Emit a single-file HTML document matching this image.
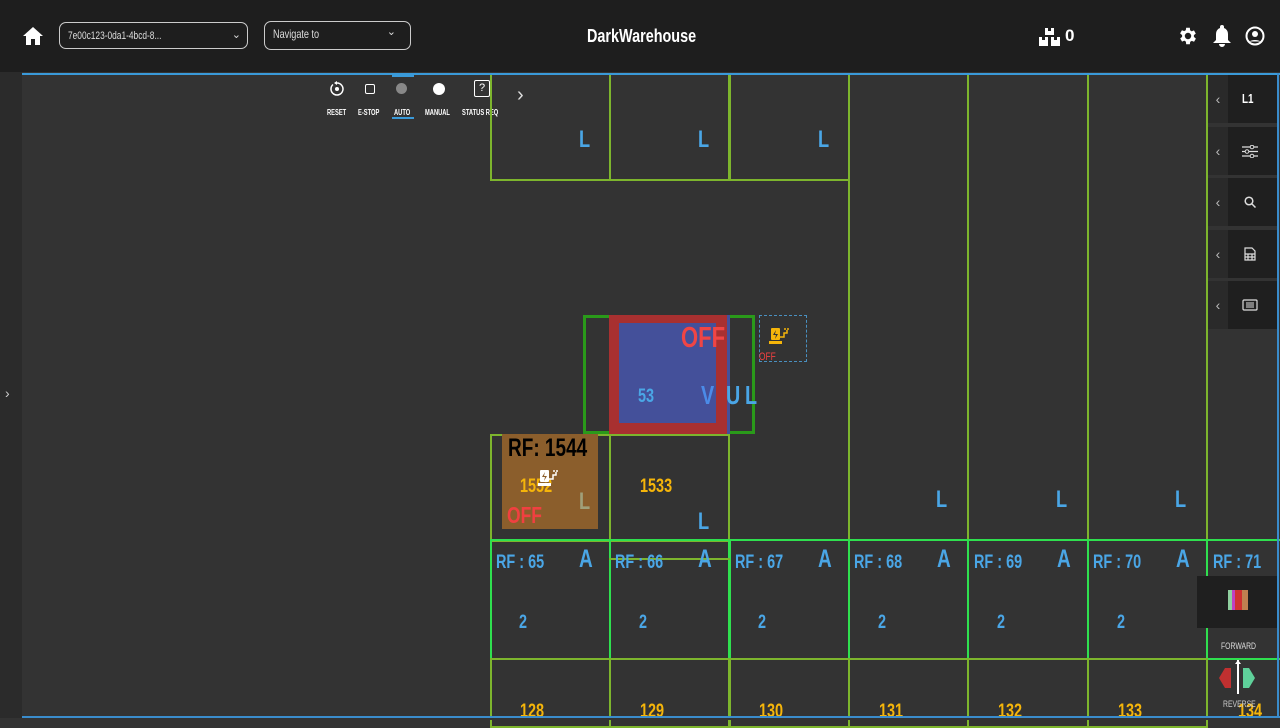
<!DOCTYPE html>
<html><head><meta charset="utf-8"><style>
*{margin:0;padding:0;box-sizing:border-box}
body{width:1280px;height:720px;overflow:hidden;background:#333;font-family:"Liberation Sans",sans-serif;position:relative}
.a{position:absolute}
.n{transform:scaleX(.76);transform-origin:0 0;white-space:nowrap}
.hdr{left:0;top:0;width:1280px;height:72px;background:#1e1e1e}
.sel{border:1.5px solid #ccc;border-radius:7px;color:#ddd;font-size:12px}
.c{position:absolute;border:2px solid #7db52d}
.g{position:absolute;border:2px solid #2fe04f}
.t{position:absolute;font-weight:bold;color:#4aa6e6;transform:scaleX(.76);transform-origin:0 0;white-space:nowrap}
.y{position:absolute;font-weight:bold;color:#f5b50a;transform:scaleX(.76);transform-origin:0 0;white-space:nowrap}
.rb{position:absolute;left:1208px;width:70px;height:48px;background:#1f1f1f}
.rb .ch{position:absolute;left:0;top:0;width:20px;height:48px;background:#2a2a2a;color:#bbb;font-size:14px;text-align:center;line-height:48px}
.tb{position:absolute;top:108px;color:#fff;font-size:8px;font-weight:bold;transform:scaleX(.72);transform-origin:0 0;white-space:nowrap}
</style></head><body>
<div class="a hdr"></div>
<svg class="a" style="left:23px;top:27px" width="20" height="18" viewBox="0 0 20 18"><path d="M10 0L0 9h3v9h5v-6h4v6h5V9h3z" fill="#fff"/></svg>
<div class="a sel" style="left:59px;top:22px;width:189px;height:27px;padding:7px 8px;font-size:11px"><span class="a n" style="left:8px;top:7px">7e00c123-0da1-4bcd-8...</span><span style="position:absolute;right:6px;top:5px;font-size:11px">⌄</span></div>
<div class="a sel" style="left:264px;top:21px;width:147px;height:29px;padding:6px 8px"><span class="a n" style="left:8px;top:5px">Navigate to</span><span style="position:absolute;right:14px;top:3px;font-size:11px">⌄</span></div>
<div class="a n" style="left:587px;top:26px;color:#fff;font-weight:bold;font-size:18px;transform:scaleX(.8)">DarkWarehouse</div>
<svg class="a" style="left:1039px;top:28px" width="22" height="18" viewBox="0 0 22 18"><path d="M6 0h9v7H6zM0 9h9v9H0zM12 9h9v9h-9z" fill="#fff"/><path d="M9 0v3h3V0M3 9v3h3V9M15 9v3h3V9" fill="#1e1e1e"/></svg>
<div class="a" style="left:1065px;top:26px;color:#fff;font-weight:bold;font-size:17px">0</div>
<svg class="a" style="left:1177px;top:25px" width="22" height="22" viewBox="0 0 24 24"><path fill="#fff" d="M19.4 13a7.5 7.5 0 000-2l2.1-1.6-2-3.5-2.5 1a7 7 0 00-1.7-1L15 3h-4l-.4 2.7a7 7 0 00-1.7 1l-2.5-1-2 3.5L6.6 11a7.5 7.5 0 000 2l-2.1 1.6 2 3.5 2.5-1a7 7 0 001.7 1L11 21h4l.4-2.7a7 7 0 001.7-1l2.5 1 2-3.5zM13 15.5a3.5 3.5 0 110-7 3.5 3.5 0 010 7z" transform="translate(-1 0)"/></svg>
<svg class="a" style="left:1213px;top:25px" width="18" height="22" viewBox="0 0 18 22"><path fill="#fff" d="M9 0a2 2 0 012 2v1a6 6 0 014 6v6l3 3H0l3-3V9a6 6 0 014-6V2a2 2 0 012-2zM6 19h6a3 3 0 01-6 0z"/></svg>
<svg class="a" style="left:1245px;top:26px" width="20" height="20" viewBox="0 0 20 20"><circle cx="10" cy="10" r="8.5" fill="none" stroke="#fff" stroke-width="2"/><circle cx="10" cy="8" r="3" fill="#fff"/><path d="M4.5 15.5a7 4 0 0111 0" fill="#fff"/></svg>

<div class="a" style="left:0;top:72px;width:22px;height:648px;background:#2b2b2b"></div>
<div class="a" style="left:5px;top:385px;color:#ccc;font-size:14px">›</div>

<!-- toolbar -->
<svg class="a" style="left:329px;top:81px" width="16" height="16" viewBox="0 0 16 16"><path d="M4 3.5A6 6 0 108 2" fill="none" stroke="#fff" stroke-width="1.5"/><path d="M8 0v4l-3-2z" fill="#fff"/><circle cx="8" cy="8" r="2" fill="#fff"/></svg>
<div class="a" style="left:365px;top:84px;width:10px;height:10px;border:1.5px solid #fff;border-radius:2px"></div>
<div class="a" style="left:392px;top:75px;width:22px;height:2px;background:#3a9ad9"></div>
<div class="a" style="left:396px;top:83px;width:11px;height:11px;border-radius:50%;background:#888"></div>
<div class="a" style="left:433px;top:83px;width:12px;height:12px;border-radius:50%;background:#fff"></div>
<div class="a" style="left:474px;top:80px;width:16px;height:17px;border:1.5px solid #fff;border-radius:2px;color:#fff;font-size:11px;text-align:center;line-height:14px">?</div>
<div class="a" style="left:392px;top:117px;width:22px;height:2px;background:#3a9ad9"></div>
<div class="tb" style="left:327px">RESET</div>
<div class="tb" style="left:358px">E-STOP</div>
<div class="tb" style="left:394px">AUTO</div>
<div class="tb" style="left:425px">MANUAL</div>
<div class="tb" style="left:462px">STATUS REQ</div>
<div class="a" style="left:517px;top:84px;color:#ddd;font-size:20px">›</div>

<!-- top cells -->
<div class="c" style="left:490px;top:73px;width:121px;height:108px"></div>
<div class="c" style="left:609px;top:73px;width:122px;height:108px"></div>
<div class="c" style="left:728px;top:73px;width:122px;height:108px"></div>
<div class="t" style="left:579px;top:126px;font-size:24px">L</div>
<div class="t" style="left:698px;top:126px;font-size:24px">L</div>
<div class="t" style="left:818px;top:126px;font-size:24px">L</div>
<div class="a" style="left:848px;top:73px;width:2px;height:468px;background:#7db52d"></div>
<div class="a" style="left:967px;top:73px;width:2px;height:468px;background:#7db52d"></div>
<div class="a" style="left:1087px;top:73px;width:2px;height:468px;background:#7db52d"></div>
<div class="a" style="left:1206px;top:73px;width:2px;height:647px;background:#7db52d"></div>
<div class="t" style="left:936px;top:486px;font-size:24px">L</div>
<div class="t" style="left:1056px;top:486px;font-size:24px">L</div>
<div class="t" style="left:1175px;top:486px;font-size:24px">L</div>

<!-- middle cells -->
<div class="c" style="left:490px;top:434px;width:121px;height:108px"></div>
<div class="c" style="left:609px;top:434px;width:121px;height:108px"></div>
<div class="a" style="left:502px;top:434px;width:96px;height:95px;background:#8b5e2c"></div>
<div class="a n" style="left:508px;top:434px;font-weight:bold;font-size:25px;color:#000">RF: 1544</div>
<div class="y" style="left:520px;top:476px;font-size:19px">1552</div>
<svg class="a" style="left:538px;top:469px" width="22" height="18" viewBox="0 0 22 18"><rect x="2" y="1" width="9" height="12" rx="1" fill="#fff"/><path d="M7 3l-3 5h3l-1 4 3-5H6z" fill="#8b5e2c"/><rect x="0" y="14" width="13" height="3" fill="#fff"/><path d="M11 10h4v-4h3v-3M16 3v-2M19 3v-2" stroke="#fff" stroke-width="1.5" fill="none"/></svg>
<div class="a n" style="left:579px;top:488px;font-weight:bold;font-size:24px;color:#a0a07a">L</div>
<div class="a n" style="left:507px;top:502px;font-weight:bold;font-size:23px;color:#f04040">OFF</div>
<div class="y" style="left:640px;top:476px;font-size:19px">1533</div>
<div class="t" style="left:698px;top:508px;font-size:24px">L</div>

<!-- robot -->
<div class="c" style="left:583px;top:315px;width:172px;height:119px;border-color:#2a9a1a;border-width:3px"></div>
<div class="a" style="left:609px;top:315px;width:119px;height:119px;background:#a83030"></div>
<div class="a" style="left:619px;top:323px;width:97px;height:100px;background:#44509a"></div>
<div class="a" style="left:727px;top:315px;width:3px;height:119px;background:#44509a"></div>
<div class="a n" style="left:681px;top:322px;font-weight:bold;font-size:29px;color:#f04545">OFF</div>
<div class="t" style="left:638px;top:386px;font-size:19px">53</div>
<div class="t" style="left:701px;top:380px;font-size:26px;color:#4b8be8">V</div>
<div class="t" style="left:726px;top:380px;font-size:26px">U</div>
<div class="t" style="left:745px;top:380px;font-size:26px">L</div>
<div class="a" style="left:759px;top:315px;width:48px;height:47px;border:1px dashed #4a90c0"></div>
<div class="a" style="left:761px;top:320px;width:44px;height:38px;background:#333"></div>
<svg class="a" style="left:769px;top:327px" width="22" height="18" viewBox="0 0 22 18"><rect x="2" y="1" width="9" height="12" rx="1" fill="#f5b50a"/><path d="M7 3l-3 5h3l-1 4 3-5H6z" fill="#333"/><rect x="0" y="14" width="13" height="3" fill="#f5b50a"/><path d="M11 10h4v-4h3v-3M16 3v-2M19 3v-2" stroke="#f5b50a" stroke-width="1.5" fill="none"/></svg>
<div class="a n" style="left:759px;top:351px;font-size:11px;color:#f04040">OFF</div>

<!-- RF row -->
<div class="g" style="left:490px;top:539px;width:121px;height:121px"></div>
<div class="g" style="left:609px;top:539px;width:122px;height:121px"></div>
<div class="g" style="left:728px;top:539px;width:122px;height:121px"></div>
<div class="g" style="left:848px;top:539px;width:121px;height:121px"></div>
<div class="g" style="left:967px;top:539px;width:122px;height:121px"></div>
<div class="g" style="left:1087px;top:539px;width:121px;height:121px"></div>
<div class="g" style="left:1206px;top:539px;width:74px;height:121px;border-right:none"></div>
<div class="a" style="left:609px;top:558px;width:121px;height:2px;background:#7db52d"></div>
<div class="t" style="left:496px;top:552px;font-size:19px">RF : 65</div>
<div class="t" style="left:615px;top:552px;font-size:19px">RF : 66</div>
<div class="t" style="left:735px;top:552px;font-size:19px">RF : 67</div>
<div class="t" style="left:854px;top:552px;font-size:19px">RF : 68</div>
<div class="t" style="left:974px;top:552px;font-size:19px">RF : 69</div>
<div class="t" style="left:1093px;top:552px;font-size:19px">RF : 70</div>
<div class="t" style="left:1213px;top:552px;font-size:19px">RF : 71</div>
<div class="t" style="left:579px;top:545px;font-size:25px">A</div>
<div class="t" style="left:698px;top:545px;font-size:25px">A</div>
<div class="t" style="left:818px;top:545px;font-size:25px">A</div>
<div class="t" style="left:937px;top:545px;font-size:25px">A</div>
<div class="t" style="left:1057px;top:545px;font-size:25px">A</div>
<div class="t" style="left:1176px;top:545px;font-size:25px">A</div>
<div class="t" style="left:519px;top:612px;font-size:19px">2</div>
<div class="t" style="left:639px;top:612px;font-size:19px">2</div>
<div class="t" style="left:758px;top:612px;font-size:19px">2</div>
<div class="t" style="left:878px;top:612px;font-size:19px">2</div>
<div class="t" style="left:997px;top:612px;font-size:19px">2</div>
<div class="t" style="left:1117px;top:612px;font-size:19px">2</div>

<!-- bottom row -->
<div class="c" style="left:490px;top:658px;width:121px;height:70px"></div>
<div class="c" style="left:609px;top:658px;width:122px;height:70px"></div>
<div class="c" style="left:728px;top:658px;width:122px;height:70px"></div>
<div class="c" style="left:848px;top:658px;width:121px;height:70px"></div>
<div class="c" style="left:967px;top:658px;width:122px;height:70px"></div>
<div class="c" style="left:1087px;top:658px;width:121px;height:70px"></div>
<div class="y" style="left:520px;top:701px;font-size:19px">128</div>
<div class="y" style="left:640px;top:701px;font-size:19px">129</div>
<div class="y" style="left:759px;top:701px;font-size:19px">130</div>
<div class="y" style="left:879px;top:701px;font-size:19px">131</div>
<div class="y" style="left:998px;top:701px;font-size:19px">132</div>
<div class="y" style="left:1118px;top:701px;font-size:19px">133</div>
<div class="y" style="left:1238px;top:701px;font-size:19px">134</div>

<!-- right panel -->
<div class="rb" style="top:75px"><div class="ch">‹</div><div class="a n" style="left:34px;top:16px;color:#fff;font-weight:bold;font-size:13px">L1</div></div>
<div class="rb" style="top:127px"><div class="ch">‹</div><svg class="a" style="left:34px;top:18px" width="16" height="13" viewBox="0 0 16 13"><path d="M0 2h16M0 6.5h16M0 11h16" stroke="#ddd" stroke-width="1.2"/><circle cx="10" cy="2" r="1.8" fill="#1f1f1f" stroke="#ddd"/><circle cx="5" cy="6.5" r="1.8" fill="#1f1f1f" stroke="#ddd"/><circle cx="10" cy="11" r="1.8" fill="#1f1f1f" stroke="#ddd"/></svg></div>
<div class="rb" style="top:178px"><div class="ch">‹</div><svg class="a" style="left:36px;top:18px" width="12" height="12" viewBox="0 0 12 12"><circle cx="5" cy="5" r="3.8" fill="none" stroke="#ddd" stroke-width="1.5"/><path d="M8 8l3.5 3.5" stroke="#ddd" stroke-width="1.5"/></svg></div>
<div class="rb" style="top:230px"><div class="ch">‹</div><svg class="a" style="left:36px;top:17px" width="12" height="14" viewBox="0 0 12 14"><path d="M1 1h7l3 3v9H1z M1 7h10M1 10h10M4 7v6M8 7v6" fill="none" stroke="#ddd" stroke-width="1.2"/></svg></div>
<div class="rb" style="top:281px"><div class="ch">‹</div><svg class="a" style="left:34px;top:18px" width="16" height="12" viewBox="0 0 16 12"><rect x="1" y="1" width="14" height="10" rx="1" fill="none" stroke="#ddd" stroke-width="1.2"/><path d="M4 4h8M4 6h8M4 8h8" stroke="#ddd"/></svg></div>
<div class="a" style="left:1197px;top:576px;width:82px;height:52px;background:#1f1f1f"></div>
<div class="a" style="left:1228px;top:590px;width:20px;height:20px;background:linear-gradient(90deg,#8fcf9f 0 20%,#c040c0 20% 35%,#d03030 35% 70%,#c08050 70%)"></div>
<div class="a n" style="left:1221px;top:641px;color:#ddd;font-size:9px">FORWARD</div>
<svg class="a" style="left:1219px;top:660px" width="40" height="36" viewBox="0 0 40 36"><path d="M0 18L6 8h6v20H6z" fill="#c03030"/><path d="M24 8h6l6 10-6 10h-6z" fill="#5fd09a"/><path d="M19 0v34" stroke="#fff" stroke-width="2"/><path d="M16 4l3-4 3 4z" fill="#fff"/></svg>
<div class="a n" style="left:1223px;top:699px;color:#ccc;font-size:9px">REVERSE</div>

<!-- frame lines on top -->
<div class="a" style="left:22px;top:73px;width:1258px;height:2px;background:#3a9ad9"></div>
<div class="a" style="left:1277px;top:73px;width:2px;height:647px;background:#3a8ccc"></div>
<div class="a" style="left:22px;top:716px;width:1258px;height:2px;background:#3a8ccc"></div>
<div class="a" style="left:0;top:718px;width:1280px;height:2px;background:#333"></div>
</body></html>
